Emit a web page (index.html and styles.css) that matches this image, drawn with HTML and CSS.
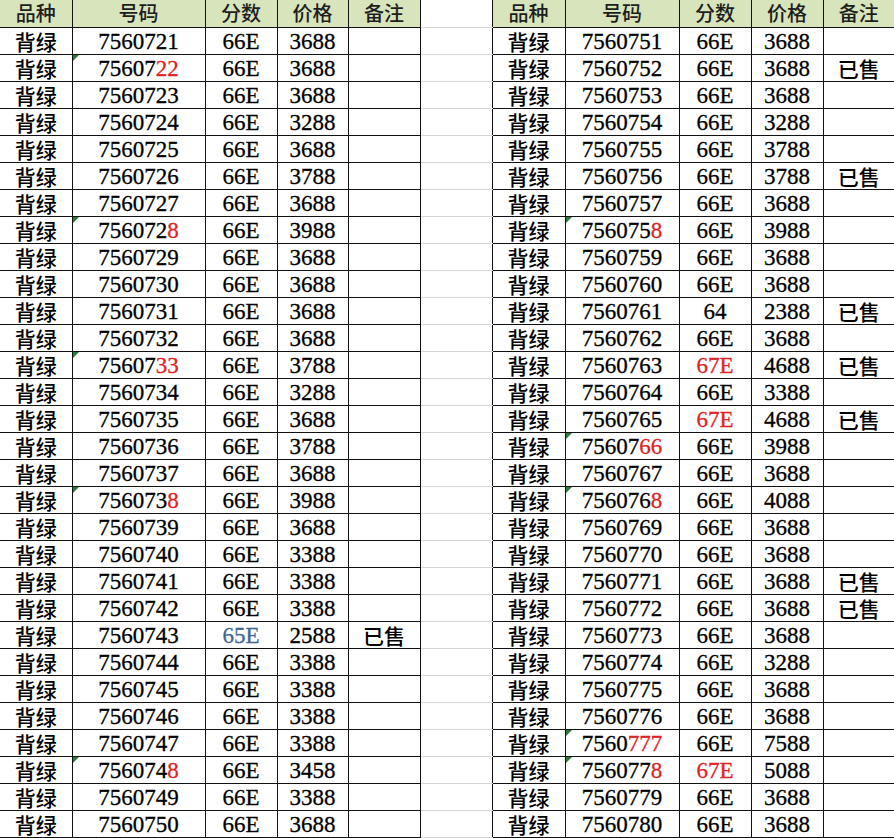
FILE: index.html
```html
<!DOCTYPE html>
<html lang="zh">
<head>
<meta charset="utf-8">
<title>背绿</title>
<link rel="stylesheet" href="styles.css">
</head>
<body>
<table class="sheet">
<colgroup>
<col class="c72"><col class="c133"><col class="c72"><col class="c71"><col class="c72">
<col class="c72">
<col class="c73"><col class="c114"><col class="c72"><col class="c72"><col class="c71">
</colgroup>
<thead>
<tr><th>品种</th><th>号码</th><th>分数</th><th>价格</th><th>备注</th><th class="gap"></th><th>品种</th><th>号码</th><th>分数</th><th>价格</th><th class="last">备注</th></tr>
</thead>
<tbody>
<tr><td class="k">背绿</td><td class="n">7560721</td><td class="n">66E</td><td class="n">3688</td><td class="k"></td><td class="gap"></td><td class="k">背绿</td><td class="n">7560751</td><td class="n">66E</td><td class="n">3688</td><td class="k last"></td></tr>
<tr><td class="k">背绿</td><td class="n tri">75607<span class="red">22</span></td><td class="n">66E</td><td class="n">3688</td><td class="k"></td><td class="gap"></td><td class="k">背绿</td><td class="n">7560752</td><td class="n">66E</td><td class="n">3688</td><td class="k last">已售</td></tr>
<tr><td class="k">背绿</td><td class="n">7560723</td><td class="n">66E</td><td class="n">3688</td><td class="k"></td><td class="gap"></td><td class="k">背绿</td><td class="n">7560753</td><td class="n">66E</td><td class="n">3688</td><td class="k last"></td></tr>
<tr><td class="k">背绿</td><td class="n">7560724</td><td class="n">66E</td><td class="n">3288</td><td class="k"></td><td class="gap"></td><td class="k">背绿</td><td class="n">7560754</td><td class="n">66E</td><td class="n">3288</td><td class="k last"></td></tr>
<tr><td class="k">背绿</td><td class="n">7560725</td><td class="n">66E</td><td class="n">3688</td><td class="k"></td><td class="gap"></td><td class="k">背绿</td><td class="n">7560755</td><td class="n">66E</td><td class="n">3788</td><td class="k last"></td></tr>
<tr><td class="k">背绿</td><td class="n">7560726</td><td class="n">66E</td><td class="n">3788</td><td class="k"></td><td class="gap"></td><td class="k">背绿</td><td class="n">7560756</td><td class="n">66E</td><td class="n">3788</td><td class="k last">已售</td></tr>
<tr><td class="k">背绿</td><td class="n">7560727</td><td class="n">66E</td><td class="n">3688</td><td class="k"></td><td class="gap"></td><td class="k">背绿</td><td class="n">7560757</td><td class="n">66E</td><td class="n">3688</td><td class="k last"></td></tr>
<tr><td class="k">背绿</td><td class="n tri">756072<span class="red">8</span></td><td class="n">66E</td><td class="n">3988</td><td class="k"></td><td class="gap"></td><td class="k">背绿</td><td class="n tri">756075<span class="red">8</span></td><td class="n">66E</td><td class="n">3988</td><td class="k last"></td></tr>
<tr><td class="k">背绿</td><td class="n">7560729</td><td class="n">66E</td><td class="n">3688</td><td class="k"></td><td class="gap"></td><td class="k">背绿</td><td class="n">7560759</td><td class="n">66E</td><td class="n">3688</td><td class="k last"></td></tr>
<tr><td class="k">背绿</td><td class="n">7560730</td><td class="n">66E</td><td class="n">3688</td><td class="k"></td><td class="gap"></td><td class="k">背绿</td><td class="n">7560760</td><td class="n">66E</td><td class="n">3688</td><td class="k last"></td></tr>
<tr><td class="k">背绿</td><td class="n">7560731</td><td class="n">66E</td><td class="n">3688</td><td class="k"></td><td class="gap"></td><td class="k">背绿</td><td class="n">7560761</td><td class="n">64</td><td class="n">2388</td><td class="k last">已售</td></tr>
<tr><td class="k">背绿</td><td class="n">7560732</td><td class="n">66E</td><td class="n">3688</td><td class="k"></td><td class="gap"></td><td class="k">背绿</td><td class="n">7560762</td><td class="n">66E</td><td class="n">3688</td><td class="k last"></td></tr>
<tr><td class="k">背绿</td><td class="n tri">75607<span class="red">33</span></td><td class="n">66E</td><td class="n">3788</td><td class="k"></td><td class="gap"></td><td class="k">背绿</td><td class="n">7560763</td><td class="n red">67E</td><td class="n">4688</td><td class="k last">已售</td></tr>
<tr><td class="k">背绿</td><td class="n">7560734</td><td class="n">66E</td><td class="n">3288</td><td class="k"></td><td class="gap"></td><td class="k">背绿</td><td class="n">7560764</td><td class="n">66E</td><td class="n">3388</td><td class="k last"></td></tr>
<tr><td class="k">背绿</td><td class="n">7560735</td><td class="n">66E</td><td class="n">3688</td><td class="k"></td><td class="gap"></td><td class="k">背绿</td><td class="n">7560765</td><td class="n red">67E</td><td class="n">4688</td><td class="k last">已售</td></tr>
<tr><td class="k">背绿</td><td class="n">7560736</td><td class="n">66E</td><td class="n">3788</td><td class="k"></td><td class="gap"></td><td class="k">背绿</td><td class="n tri">75607<span class="red">66</span></td><td class="n">66E</td><td class="n">3988</td><td class="k last"></td></tr>
<tr><td class="k">背绿</td><td class="n">7560737</td><td class="n">66E</td><td class="n">3688</td><td class="k"></td><td class="gap"></td><td class="k">背绿</td><td class="n">7560767</td><td class="n">66E</td><td class="n">3688</td><td class="k last"></td></tr>
<tr><td class="k">背绿</td><td class="n tri">756073<span class="red">8</span></td><td class="n">66E</td><td class="n">3988</td><td class="k"></td><td class="gap"></td><td class="k">背绿</td><td class="n tri">756076<span class="red">8</span></td><td class="n">66E</td><td class="n">4088</td><td class="k last"></td></tr>
<tr><td class="k">背绿</td><td class="n">7560739</td><td class="n">66E</td><td class="n">3688</td><td class="k"></td><td class="gap"></td><td class="k">背绿</td><td class="n">7560769</td><td class="n">66E</td><td class="n">3688</td><td class="k last"></td></tr>
<tr><td class="k">背绿</td><td class="n">7560740</td><td class="n">66E</td><td class="n">3388</td><td class="k"></td><td class="gap"></td><td class="k">背绿</td><td class="n">7560770</td><td class="n">66E</td><td class="n">3688</td><td class="k last"></td></tr>
<tr><td class="k">背绿</td><td class="n">7560741</td><td class="n">66E</td><td class="n">3388</td><td class="k"></td><td class="gap"></td><td class="k">背绿</td><td class="n">7560771</td><td class="n">66E</td><td class="n">3688</td><td class="k last">已售</td></tr>
<tr><td class="k">背绿</td><td class="n">7560742</td><td class="n">66E</td><td class="n">3388</td><td class="k"></td><td class="gap"></td><td class="k">背绿</td><td class="n">7560772</td><td class="n">66E</td><td class="n">3688</td><td class="k last">已售</td></tr>
<tr><td class="k">背绿</td><td class="n">7560743</td><td class="n blue">65E</td><td class="n">2588</td><td class="k">已售</td><td class="gap"></td><td class="k">背绿</td><td class="n">7560773</td><td class="n">66E</td><td class="n">3688</td><td class="k last"></td></tr>
<tr><td class="k">背绿</td><td class="n">7560744</td><td class="n">66E</td><td class="n">3388</td><td class="k"></td><td class="gap"></td><td class="k">背绿</td><td class="n">7560774</td><td class="n">66E</td><td class="n">3288</td><td class="k last"></td></tr>
<tr><td class="k">背绿</td><td class="n">7560745</td><td class="n">66E</td><td class="n">3388</td><td class="k"></td><td class="gap"></td><td class="k">背绿</td><td class="n">7560775</td><td class="n">66E</td><td class="n">3688</td><td class="k last"></td></tr>
<tr><td class="k">背绿</td><td class="n">7560746</td><td class="n">66E</td><td class="n">3388</td><td class="k"></td><td class="gap"></td><td class="k">背绿</td><td class="n">7560776</td><td class="n">66E</td><td class="n">3688</td><td class="k last"></td></tr>
<tr><td class="k">背绿</td><td class="n">7560747</td><td class="n">66E</td><td class="n">3388</td><td class="k"></td><td class="gap"></td><td class="k">背绿</td><td class="n tri">7560<span class="red">777</span></td><td class="n">66E</td><td class="n">7588</td><td class="k last"></td></tr>
<tr><td class="k">背绿</td><td class="n tri">756074<span class="red">8</span></td><td class="n">66E</td><td class="n">3458</td><td class="k"></td><td class="gap"></td><td class="k">背绿</td><td class="n tri">756077<span class="red">8</span></td><td class="n red">67E</td><td class="n">5088</td><td class="k last"></td></tr>
<tr><td class="k">背绿</td><td class="n">7560749</td><td class="n">66E</td><td class="n">3388</td><td class="k"></td><td class="gap"></td><td class="k">背绿</td><td class="n">7560779</td><td class="n">66E</td><td class="n">3688</td><td class="k last"></td></tr>
<tr><td class="k">背绿</td><td class="n">7560750</td><td class="n">66E</td><td class="n">3688</td><td class="k"></td><td class="gap"></td><td class="k">背绿</td><td class="n">7560780</td><td class="n">66E</td><td class="n">3688</td><td class="k last"></td></tr>
</tbody>
</table>
</body>
</html>
```
FILE: styles.css
```css
html, body {
  margin: 0;
  padding: 0;
  background: #fff;
}
.sheet {
  border-collapse: collapse;
  table-layout: fixed;
  width: 894px;
  color: #000;
}
.c72 { width: 72px; }
.c133 { width: 133px; }
.c71 { width: 71px; }
.c73 { width: 73px; }
.c114 { width: 114px; }
.sheet tr {
  height: 27px;
}
.sheet th,
.sheet td {
  height: 26px;
  box-sizing: border-box;
  padding: 0;
  border: 1px solid #111;
  text-align: center;
  vertical-align: middle;
  white-space: nowrap;
  overflow: hidden;
  line-height: 26px;
}
.sheet th {
  background: #d8e4bc;
  font-family: "Noto Sans CJK SC", sans-serif;
  font-weight: 500;
  font-size: 20px;
  color: #1e1e1e;
  border-top: none;
}
.sheet th:first-child,
.sheet td:first-child {
  border-left: none;
}
.sheet .last {
  border-right: none;
}
.sheet .gap {
  background: #fff;
  border-top-color: #d6d6d6;
  border-bottom-color: #d6d6d6;
}
.k {
  font-family: "Noto Sans CJK SC", sans-serif;
  font-weight: 500;
  font-size: 21px;
}
.n {
  font-family: "Liberation Serif", serif;
  font-size: 23px;
  -webkit-text-stroke: 0.3px currentColor;
}
.sheet td.n {
  padding-top: 2px;
  line-height: 24px;
}
.tri {
  position: relative;
}
.tri::before {
  content: "";
  position: absolute;
  left: 0;
  top: 0;
  border-top: 6px solid #2b7a3b;
  border-right: 6px solid transparent;
}
.red {
  color: #e0231f;
}
.blue {
  color: #3f6690;
}
```
